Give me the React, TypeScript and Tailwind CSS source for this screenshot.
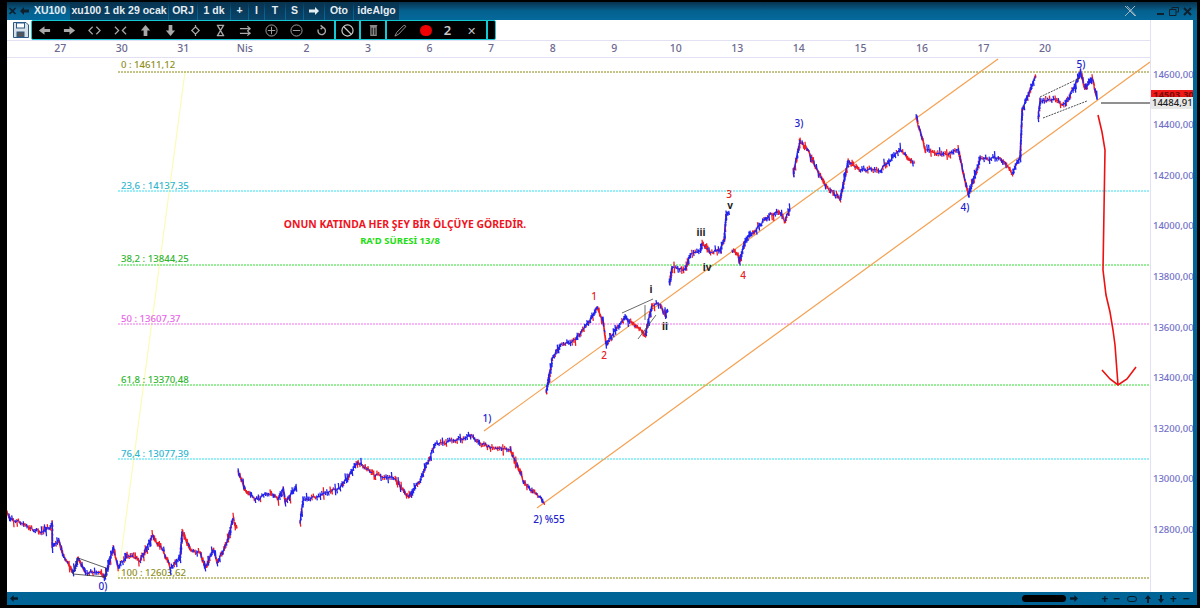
import React from 'react';

const FONT = "font-['Noto_Sans','Open_Sans',sans-serif]";
const TAB_FONT = "font-['Liberation_Sans',Arial,sans-serif]";

type Pt = [number, number];

// waypoints of the price line, one array per trading gap
const PRICE_LEGS: Pt[][] = [
  [[7,515],[10,520],[20,522],[33,530],[43,532],[50,527],[52,523],[52,547],[58,540],[63,555],[68,565],[73,573],[78,558],[85,572],[100,573],[105,577],[113,548],[118,567],[127,555],[140,560],[152,537],[163,550],[170,568],[180,557],[182,532],[190,550],[200,553],[205,568],[213,550],[217,562],[227,543],[233,518],[237,530]],
  [[238,472],[245,490],[255,500],[270,493],[278,500],[283,488],[285,503],[297,485]],
  [[300,522],[303,500],[320,495],[340,488],[358,462],[375,475],[395,478],[408,497],[420,480],[435,445],[455,440],[470,436],[490,448],[510,450],[525,485],[540,498],[545,503]],
  [[546,393],[552,360],[560,345],[575,340],[590,320],[597,307],[603,322],[606,345],[615,330],[625,318],[640,330],[645,335],[652,305],[660,305],[665,315],[668,308]],
  [[669,285],[672,268],[685,270],[690,255],[700,250],[702,243],[710,252],[720,250],[724,240],[726,215],[730,211]],
  [[732,250],[738,255],[739,263],[745,240],[760,225],[770,215],[778,212],[785,220],[790,208]],
  [[793,175],[800,140],[810,155],[825,185],[840,200],[848,160],[860,170],[880,170],[900,150],[915,165]],
  [[916,118],[925,150],[945,155],[958,150],[968,195],[980,160],[1000,158],[1012,173],[1020,157],[1022,110],[1030,90],[1036,75]],
  [[1038,118],[1040,100],[1055,100],[1065,105],[1075,85],[1080,72],[1085,90],[1092,78],[1097,100]],
];

function buildPrice() {
  let seed = 20240429;
  const rand = () => {
    seed = (seed + 0x6d2b79f5) | 0;
    let t = Math.imul(seed ^ (seed >>> 15), 1 | seed);
    t = (t + Math.imul(t ^ (t >>> 7), 61 | t)) ^ t;
    return ((t ^ (t >>> 14)) >>> 0) / 4294967296;
  };
  let up = '';
  let down = '';
  for (const leg of PRICE_LEGS) {
    let prev: Pt | null = null;
    for (let i = 0; i < leg.length - 1; i++) {
      const [x0, y0] = leg[i];
      const [x1, y1] = leg[i + 1];
      const steps = Math.max(1, Math.round(Math.hypot(x1 - x0, y1 - y0) / 1.8));
      const slope = y1 - y0;
      for (let s = 0; s < steps; s++) {
        const t = s / steps;
        const x = x0 + (x1 - x0) * t;
        const y = y0 + slope * t + (rand() - 0.5) * 3.5;
        const top = y - 1 - rand() * 2.5 - (rand() < 0.1 ? 3 : 0);
        const bottom = y + 1 + rand() * 2.5 + (rand() < 0.1 ? 3 : 0);
        const bar = `M${x.toFixed(1)} ${top.toFixed(1)}L${(x + 0.7).toFixed(1)} ${bottom.toFixed(1)}`;
        if (rand() < (slope > 0 ? 0.35 : 0.65)) up += bar;
        else down += bar;
        if (prev) {
          const link = `M${prev[0].toFixed(1)} ${prev[1].toFixed(1)}L${x.toFixed(1)} ${y.toFixed(1)}`;
          if (y <= prev[1]) up += link;
          else down += link;
        }
        prev = [x, y];
      }
    }
  }
  return { up, down };
}

const PRICE = buildPrice();

const FIB_LINES = [
  { y: 72, color: '#8a8a10', label: '0 : 14611,12', ly: 64 },
  { y: 191, color: '#35e0f0', label: '23,6 : 14137,35', ly: 185 },
  { y: 265, color: '#33dd33', label: '38,2 : 13844,25', ly: 258 },
  { y: 324, color: '#f070f0', label: '50 : 13607,37', ly: 318 },
  { y: 385, color: '#33dd33', label: '61,8 : 13370,48', ly: 379 },
  { y: 459, color: '#35e0f0', label: '76,4 : 13077,39', ly: 453 },
  { y: 578, color: '#8a8a10', label: '100 : 12603,62', ly: 572 },
];

const FIB_TEXT: Record<string, string> = {
  '#8a8a10': '#8f8f1e',
  '#35e0f0': '#2fb6cf',
  '#33dd33': '#2fb52f',
  '#f070f0': '#e866e8',
};

const WAVES = [
  { x: 594, y: 296, t: '1', c: '#e82020' },
  { x: 604, y: 355, t: '2', c: '#e82020' },
  { x: 729, y: 194, t: '3', c: '#e82020' },
  { x: 743, y: 275, t: '4', c: '#e82020' },
  { x: 651, y: 289, t: 'i', c: '#222' },
  { x: 665, y: 326, t: 'ii', c: '#222' },
  { x: 701, y: 232, t: 'iii', c: '#222' },
  { x: 707, y: 267, t: 'iv', c: '#222' },
  { x: 730, y: 205, t: 'v', c: '#222' },
  { x: 487, y: 418, t: '1)', c: '#2222cc' },
  { x: 549, y: 519, t: '2) %55', c: '#2222cc' },
  { x: 799, y: 123, t: '3)', c: '#2222cc' },
  { x: 965, y: 207, t: '4)', c: '#2222cc' },
  { x: 1081, y: 64, t: '5)', c: '#2222cc' },
  { x: 103, y: 586, t: '0)', c: '#2222cc' },
];

const DAYS = ['27', '30', '31', 'Nis', '2', '3', '6', '7', '8', '9', '10', '13', '14', '15', '16', '17', '20'];
const PRICES = ['14600,00', '14400,00', '14200,00', '14000,00', '13800,00', '13600,00', '13400,00', '13200,00', '13000,00', '12800,00'];

const TABS = [
  { label: 'XU100', w: 'w-[38px]', dark: false },
  { label: 'xu100 1 dk 29 ocak', w: 'w-[98px]', dark: true },
  { label: 'ORJ', w: 'w-[28px]', dark: true },
  { label: '1 dk', w: 'w-[32px]', dark: true },
  { label: '+', w: 'w-[17px]', dark: true },
  { label: 'I', w: 'w-[15px]', dark: true },
  { label: 'T', w: 'w-[20px]', dark: true },
  { label: 'S', w: 'w-[17px]', dark: true },
];

const Ico: React.FC<{ children: React.ReactNode; fill?: boolean }> = ({ children, fill }) => (
  <svg width="13" height="13" viewBox="0 0 14 14" fill={fill ? 'currentColor' : 'none'} stroke={fill ? 'none' : 'currentColor'} strokeWidth="1.3">
    {children}
  </svg>
);

const ToolBtn: React.FC<{ children: React.ReactNode }> = ({ children }) => (
  <div className="w-[25.5px] h-full flex items-center justify-center text-[#a8a8a8]">{children}</div>
);

const Chart: React.FC = () => (
  <svg className={`block w-full flex-1 min-h-0 ${FONT}`} viewBox="7 58 1143 534" preserveAspectRatio="none">
    <line x1="118" y1="578" x2="185" y2="72" stroke="#fbfbb8" strokeWidth="1.2" />
    {FIB_LINES.map(f => (
      <g key={f.label}>
        <line x1="118" y1={f.y} x2="1150" y2={f.y} stroke={f.color} strokeWidth="1" strokeDasharray="2 1" />
        <text x="121" y={f.ly + 4} fontSize="9.6" fontWeight="500" fill={FIB_TEXT[f.color]}>{f.label}</text>
      </g>
    ))}

    <line x1="484" y1="431" x2="998" y2="59" stroke="#f5a050" strokeWidth="1.2" />
    <line x1="537" y1="508" x2="1150" y2="62" stroke="#f5a050" strokeWidth="1.2" />

    <path d={PRICE.down} stroke="#ee1c25" strokeWidth="1.3" fill="none" />
    <path d={PRICE.up} stroke="#2222ee" strokeWidth="1.3" fill="none" />

    {/* wedges drawn by hand on the chart */}
    <path d="M73 574L78 558L106 568V577L73 574" stroke="#333" strokeWidth="0.8" fill="none" />
    <path d="M622 313L653 299M638 339L656 315M645 305V320" stroke="#444" strokeWidth="0.8" fill="none" />
    <path d="M1040 97L1080 78M1043 118L1087 101" stroke="#222" strokeWidth="0.8" strokeDasharray="2 1" fill="none" />
    <line x1="1101" y1="103" x2="1150" y2="103" stroke="#222" strokeWidth="1" />

    <path d="M1098 115L1102 132L1105 150L1104 210L1103 270L1106 295L1110 312L1113 330L1115 345L1118 385M1102 370L1110 379L1118 385L1127 379L1136 367" stroke="#ee1111" strokeWidth="1.6" fill="none" />

    <text x="405" y="228" textAnchor="middle" fontSize="10.4" fontWeight="700" fill="#f0141e">ONUN KATINDA HER ŞEY BİR ÖLÇÜYE GÖREDİR.</text>
    <text x="400" y="244" textAnchor="middle" fontSize="9.5" fontWeight="700" fill="#22dd11">RA'D SÜRESİ 13/8</text>

    {WAVES.map(w => (
      <text key={w.t + w.x} x={w.x} y={w.y + 3.5} textAnchor="middle" fontSize="10" fontWeight={w.c === '#222' ? 700 : 500} fill={w.c}>{w.t}</text>
    ))}
  </svg>
);

export default function App() {
  return (
    <div className={`w-[1200px] h-[608px] overflow-hidden bg-black pl-[7px] pr-[3px] pt-[2px] pb-[3px] ${FONT}`}>
      <div className="h-full flex flex-col bg-[#006496]">
        {/* title bar */}
        <div className={`h-[18px] shrink-0 flex items-stretch bg-gradient-to-b from-[#07334f] via-[#04618f] to-[#04699c] text-[10.5px] font-bold text-[#e4edf2] ${TAB_FONT}`}>
          <div className="w-[12px] flex items-center justify-center text-[#10202c] font-bold text-[11px] ml-[-1px]">✕</div>
          <div className="w-[13px] flex items-center justify-center">
            <svg width="9" height="8" viewBox="0 0 9 8" fill="#10202c"><path d="M0 4L4 0V2.5H9V5.5H4V8Z" /></svg>
          </div>
          <div className="flex items-stretch">
            {TABS.map(t => (
              <div key={t.label} className={`${t.w} mr-px flex items-center justify-center whitespace-nowrap ${t.dark ? 'bg-gradient-to-b from-[#07334f] to-[#0a456b]' : ''}`}>{t.label}</div>
            ))}
            <div className="w-[20px] mr-px flex items-center justify-center bg-gradient-to-b from-[#07334f] to-[#0a456b]">
              <svg width="10" height="8" viewBox="0 0 10 8" fill="#e4edf2"><path d="M10 4L6 0V2.5H0V5.5H6V8Z" /></svg>
            </div>
            <div className="w-[28px] mr-px flex items-center justify-center bg-gradient-to-b from-[#07334f] to-[#0a456b]">Oto</div>
            <div className="w-[45px] flex items-center justify-center bg-gradient-to-b from-[#07334f] to-[#0a456b]">ideAlgo</div>
          </div>
          <div className="flex-1" />
          <div className="w-[14px] mr-[17px] flex items-center justify-center">
            <svg width="12" height="12" viewBox="0 0 12 12" fill="none" stroke="#9fb4c0" strokeWidth="1"><path d="M1 1L11 11M11 1L1 11M3 1L12 11" /></svg>
          </div>
          <div className="w-[13px] flex items-end justify-center pb-[5px]"><div className="w-[7px] h-[2px] bg-[#10202c]" /></div>
          <div className="w-[13px] flex items-center justify-center">
            <svg width="10" height="9" viewBox="0 0 10 9" fill="none" stroke="#10202c" strokeWidth="1"><path d="M3 2V.5H9.5V5H7.5M.5 2.5H7V8.5H.5Z" /></svg>
          </div>
          <div className="w-[14px] mr-[3px] flex items-center justify-center">
            <svg width="9" height="9" viewBox="0 0 9 9" stroke="#10202c" strokeWidth="2"><path d="M1 1L8 8M8 1L1 8" /></svg>
          </div>
        </div>

        {/* page body */}
        <div className="flex-1 min-h-0 flex bg-white border-r-[4px] border-[#006496]">
          <div className="flex-1 min-w-0 flex flex-col">
            {/* toolbar row */}
            <div className="h-[20px] shrink-0 flex items-center">
              <div className="w-[24px] flex justify-end pr-[2px]">
                <svg width="16" height="16" viewBox="0 0 16 16" fill="#d8e0e8" stroke="#2d5a88" strokeWidth="1"><path d="M.5.5H13L15.5 3V15.5H.5Z" /><rect x="3.5" y="1" width="8" height="5" fill="#fff" /><rect x="4" y="10" width="7" height="5" fill="#555" /></svg>
              </div>
              <div className="h-[20px] w-[465px] flex items-stretch bg-black border border-[#14c8d4] rounded-[2px]">
                <div className="w-[304px] flex items-center border-r-2 border-[#14c8d4]">
                  <ToolBtn><Ico fill><path d="M1 7L7 2.5V5.5H13V8.5H7V11.5Z" /></Ico></ToolBtn>
                  <ToolBtn><Ico fill><path d="M13 7L7 2.5V5.5H1V8.5H7V11.5Z" /></Ico></ToolBtn>
                  <ToolBtn><Ico><path d="M5 3L1 7L5 11M9 3L13 7L9 11" /></Ico></ToolBtn>
                  <ToolBtn><Ico><path d="M1 3L5 7L1 11M13 3L9 7L13 11" /></Ico></ToolBtn>
                  <ToolBtn><Ico fill><path d="M7 1L12 7H9V13H5V7H2Z" /></Ico></ToolBtn>
                  <ToolBtn><Ico fill><path d="M7 13L12 7H9V1H5V7H2Z" /></Ico></ToolBtn>
                  <ToolBtn><Ico><path d="M7 1V3M7 11V13M7 3L11 7L7 11L3 7Z" /></Ico></ToolBtn>
                  <ToolBtn><Ico><path d="M3 1.5H11M3 12.5H11M4 2L7 7L4 12M10 2L7 7L10 12" strokeWidth="1.5" /></Ico></ToolBtn>
                  <ToolBtn><Ico><path d="M1 5H12M9 2.5L12 5L9 7.5M1 10H12M9 7.5L12 10L9 12.5" /></Ico></ToolBtn>
                  <ToolBtn><Ico><circle cx="7" cy="7" r="6" strokeWidth="1" /><path d="M3 7H11M7 3V11" strokeWidth="1" /></Ico></ToolBtn>
                  <ToolBtn><Ico><circle cx="7" cy="7" r="6" strokeWidth="1" /><path d="M3 7H11" strokeWidth="1" /></Ico></ToolBtn>
                  <ToolBtn><Ico><path d="M8 3.5A4 4 0 1 1 3.5 6M6 1.5L8.5 3.5L6 5.5" strokeWidth="1.5" /></Ico></ToolBtn>
                </div>
                <div className="w-[25px] flex items-center justify-center border-r-2 border-[#14c8d4] text-[#c8c8c8]">
                  <Ico><circle cx="7" cy="7" r="6" /><path d="M3 3L11 11" /></Ico>
                </div>
                <div className="w-[26px] flex items-center justify-center border-r-2 border-[#14c8d4] text-[#888]">
                  <Ico fill><path d="M3 1H11V2.5H10.5V13H3.5V2.5H3ZM5 4V11.5H6V4ZM8 4V11.5H9V4Z" /></Ico>
                </div>
                <div className="w-[101px] flex items-center border-r-2 border-[#14c8d4]">
                  <div className="w-[26px] flex justify-center text-[#9a9a9a]">
                    <Ico><path d="M1 13L3 9L10 2C11 1 13 1.5 12.5 3L5 11Z" strokeWidth="1" /></Ico>
                  </div>
                  <div className="w-[26px] flex justify-center"><div className="w-[12px] h-[11px] rounded-full bg-[#f00000]" /></div>
                  <div className="w-[17px] text-center text-[13px] font-semibold text-[#c8c8c8] leading-none">2</div>
                  <div className="flex-1 text-center text-[11px] text-[#c0c0c0] leading-none">✕</div>
                </div>
              </div>
            </div>

            {/* dates */}
            <div className="h-[18px] shrink-0 flex items-center pl-[22.5px] border-y border-[#e4e0f4] text-[10.5px] font-medium text-[#6c6890]">
              {DAYS.map(d => (
                <div key={d} className="w-[61.56px] shrink-0 text-center">{d}</div>
              ))}
            </div>

            <Chart />
          </div>

          {/* price scale */}
          <div className="relative w-[43px] shrink-0 overflow-hidden border-l border-[#e4e0f4] pt-[29.7px] text-[9.5px] font-medium text-[#7070c8]">
            {PRICES.map(p => (
              <div key={p} className="h-[50.55px] flex items-center pl-[2px] whitespace-nowrap">{p}</div>
            ))}
            <div className="absolute left-0 top-[70px] w-full h-[8px] overflow-hidden bg-[#f01818] pl-[2px] text-[9.5px] font-bold leading-[10px] text-[#7a0a0a]">14503,30</div>
            <div className="absolute left-0 top-[77px] w-full h-[12px] bg-[#e8e8e8] pl-[1px] text-[9.5px] font-medium leading-[12px] text-[#1c1c1c]">14484,91</div>
          </div>
        </div>

        {/* bottom bar */}
        <div className="h-[13px] shrink-0 flex items-center text-[#0a1a28] pl-[3px]">
          <svg width="8" height="7" viewBox="0 0 9 8" fill="currentColor"><path d="M0 4L4 0V2.5H9V5.5H4V8Z" /></svg>
          <div className="flex-1" />
          <div className="w-[44px] h-[7px] rounded-full bg-black" />
          <svg className="ml-[4px]" width="8" height="7" viewBox="0 0 9 8" fill="currentColor"><path d="M9 4L5 0V2.5H0V5.5H5V8Z" /></svg>
          <div className="w-[21px]" />
          <div className="w-[12px] text-center text-[12px] font-bold leading-none">+</div>
          <div className="w-[12px] text-center text-[12px] font-bold leading-none">−</div>
          <div className="w-[3px]" />
          <div className="w-[10px] h-[6px] rounded-full border border-[#0a1a28] mx-[1px]" />
          <div className="w-[3px]" />
          <div className="w-[13px] flex justify-center"><svg width="6" height="8" viewBox="0 0 6 8" fill="currentColor"><path d="M3 0L6 4H4V8H2V4H0Z" /></svg></div>
          <div className="w-[13px] flex justify-center"><svg width="6" height="8" viewBox="0 0 6 8" fill="currentColor"><path d="M3 8L6 4H4V0H2V4H0Z" /></svg></div>
          <div className="w-[13px] text-center text-[12px] font-bold leading-none">+</div>
          <div className="w-[13px] text-center text-[12px] font-bold leading-none">−</div>
          <div className="w-[4px]" />
        </div>
      </div>
    </div>
  );
}
